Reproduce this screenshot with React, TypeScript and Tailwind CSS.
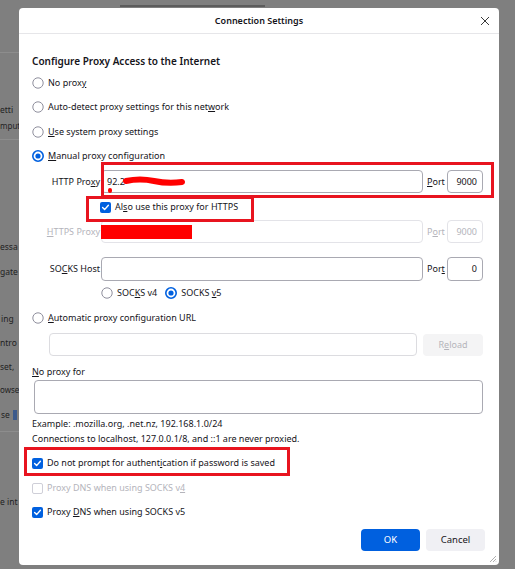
import React from 'react';

const font = { fontFamily: '"Noto Sans", "Liberation Sans", sans-serif' };

function Radio({ checked = false }: { checked?: boolean }) {
  return (
    <svg width="12" height="12" viewBox="0 0 12 12" className="shrink-0">
      {checked ? (
        <>
          <circle cx="6" cy="6" r="5.2" fill="white" stroke="#0060df" strokeWidth="1.6" />
          <circle cx="6" cy="6" r="2.6" fill="#0060df" />
        </>
      ) : (
        <circle cx="6" cy="6" r="5.2" fill="white" stroke="#8f8f9d" strokeWidth="1" />
      )}
    </svg>
  );
}

function Check({ checked = false, disabled = false }: { checked?: boolean; disabled?: boolean }) {
  if (!checked) {
    return (
      <span
        className={`w-[11px] h-[11px] shrink-0 rounded-[2px] border ${
          disabled ? 'border-[#cfcfd8]' : 'border-[#8f8f9d]'
        } bg-white`}
      />
    );
  }
  return (
    <span className="w-[11px] h-[11px] shrink-0 rounded-[2px] bg-[#0060df] flex items-center justify-center">
      <svg width="9" height="9" viewBox="0 0 9 9">
        <path d="M1.6 4.6 L3.6 6.6 L7.4 2.2" fill="none" stroke="white" strokeWidth="1.4" strokeLinecap="round" strokeLinejoin="round" />
      </svg>
    </span>
  );
}

function Field({ value = '', disabled = false, right = false, className = '' }: { value?: string; disabled?: boolean; right?: boolean; className?: string }) {
  return (
    <div
      className={`h-[23px] rounded-[4px] border bg-white flex items-center px-[5px] ${
        disabled ? 'border-[#e3e3e8] text-[#b4b4bb]' : 'border-[#a9a9b2] text-[#15141a]'
      } ${right ? 'justify-end' : ''} ${className}`}
    >
      {value}
    </div>
  );
}

export default function App() {
  return (
    <div className="w-[515px] h-[569px] bg-[#7f7f7f] flex overflow-hidden text-[9px] text-[#15141a] relative" style={font}>
      {/* dimmed prefs page peeking out on the left */}
      <div className="w-[19px] shrink-0 flex flex-col text-[#222] whitespace-nowrap overflow-hidden text-[8.5px]">
        <div className="h-[53px] border-b border-[#8d8d8d]" />
        <div className="mt-[49px] h-[16px] leading-[16px]">etti</div>
        <div className="h-[16px] leading-[16px] text-[8px]">mput</div>
        <div className="mt-[5px] border-b border-[#8d8d8d]" />
        <div className="mt-[99px] h-[16px] leading-[16px]">essa</div>
        <div className="mt-[9px] h-[16px] leading-[16px]">gate</div>
        <div className="mt-[31px] h-[16px] leading-[16px] ml-[1px]">ing</div>
        <div className="mt-[8px] h-[16px] leading-[16px]">ntro</div>
        <div className="mt-[8px] h-[16px] leading-[16px]">set,</div>
        <div className="mt-[7px] h-[16px] leading-[16px] text-[8px]">owse</div>
        <div className="mt-[9px] h-[16px] leading-[16px] ml-[1px] flex items-center gap-[3px]">
          se <span className="w-[4px] h-[10px] bg-[#3c5a8c]" />
        </div>
        <div className="mt-[8px] border-b border-[#8d8d8d]" />
        <div className="mt-[62px] h-[16px] leading-[16px]">e int</div>
      </div>

      <div className="w-[480px] shrink-0 flex flex-col">
        <div className="h-[8px]">
          <div className="ml-[101px] mt-[5px] w-[145px] h-[2px] bg-[#5c5c5c]" />
        </div>

        {/* dialog */}
        <div className="relative h-[557px] bg-white rounded-[4px] flex flex-col">
          <div className="h-[26px] border-b border-[#e6e6e9] flex items-center justify-center relative">
            <span className="font-semibold text-[9px]">Connection Settings</span>
            <svg className="absolute right-[9px] top-[8px]" width="10" height="10" viewBox="0 0 10 10">
              <path d="M1 1 L9 9 M9 1 L1 9" stroke="#3a3a3a" strokeWidth="1" />
            </svg>
          </div>

          <div className="flex flex-col pl-[13px] pr-[16px]">
            <div className="mt-[18px] h-[18px] flex items-center text-[10px] font-semibold">
              Configure Proxy Access to the Internet
            </div>

            <label className="mt-[4px] h-[18px] flex items-center gap-[4px]">
              <Radio /> <span>No prox<u>y</u></span>
            </label>
            <label className="mt-[6px] h-[18px] flex items-center gap-[4px]">
              <Radio /> <span>Auto-detect proxy settings for this net<u>w</u>ork</span>
            </label>
            <label className="mt-[7px] h-[18px] flex items-center gap-[4px]">
              <Radio /> <span><u>U</u>se system proxy settings</span>
            </label>
            <label className="mt-[6px] h-[18px] flex items-center gap-[4px]">
              <Radio checked /> <span><u>M</u>anual proxy configuration</span>
            </label>

            <div className="mt-[5px] flex items-center">
              <span className="w-[68px] text-right">HTTP Pro<u>x</u>y</span>
              <Field value="92.2" className="ml-[1px] flex-1" />
              <span className="w-[24px] pl-[4px]"><u>P</u>ort</span>
              <Field value="9000" right className="w-[36px]" />
            </div>

            <label className="mt-[5px] h-[18px] flex items-center gap-[4px] ml-[68px]">
              <Check checked /> <span>Al<u>s</u>o use this proxy for HTTPS</span>
            </label>

            <div className="mt-[4px] flex items-center text-[#b4b4bb]">
              <span className="w-[68px] text-right"><u>H</u>TTPS Proxy</span>
              <Field disabled className="ml-[1px] flex-1" />
              <span className="w-[24px] pl-[4px]">P<u>o</u>rt</span>
              <Field value="9000" disabled right className="w-[36px]" />
            </div>

            <div className="mt-[14px] flex items-center">
              <span className="w-[68px] text-right">SO<u>C</u>KS Host</span>
              <Field className="ml-[1px] flex-1 h-[24px]" />
              <span className="w-[24px] pl-[4px]">Por<u>t</u></span>
              <Field value="0" right className="w-[36px] h-[24px]" />
            </div>

            <div className="mt-[3px] h-[18px] flex items-center ml-[69px]">
              <label className="flex items-center gap-[4px]">
                <Radio /> <span>SOC<u>K</u>S v4</span>
              </label>
              <label className="flex items-center gap-[4px] ml-[8px]">
                <Radio checked /> <span>SOCKS <u>v</u>5</span>
              </label>
            </div>

            <label className="mt-[7px] h-[18px] flex items-center gap-[4px]">
              <Radio /> <span><u>A</u>utomatic proxy configuration URL</span>
            </label>

            <div className="mt-[6px] flex items-center ml-[17px] gap-[6px]">
              <Field className="flex-1 h-[22px] border-[#dcdce0]" />
              <button className="w-[60px] h-[22px] rounded-[4px] bg-[#f4f4f5] text-[#b4b4bb]">
                R<u>e</u>load
              </button>
            </div>

            <div className="mt-[8px] h-[16px] flex items-center">
              <span><u>N</u>o proxy for</span>
            </div>
            <div className="mt-[0px] ml-[2px] h-[34px] rounded-[4px] border border-[#a9a9b2]" />

            <div className="mt-[3px] h-[14px] flex items-center">
              Example: .mozilla.org, .net.nz, 192.168.1.0/24
            </div>
            <div className="mt-[1px] h-[14px] flex items-center">
              Connections to localhost, 127.0.0.1/8, and ::1 are never proxied.
            </div>

            <label className="mt-[8px] h-[18px] flex items-center gap-[4px]">
              <Check checked /> <span>Do not prompt for authent<u>i</u>cation if password is saved</span>
            </label>
            <label className="mt-[7px] h-[18px] flex items-center gap-[4px] text-[#b4b4bb]">
              <Check disabled /> <span>Proxy DNS when using SOCKS v<u>4</u></span>
            </label>
            <label className="mt-[6px] h-[18px] flex items-center gap-[4px]">
              <Check checked /> <span>Proxy <u>D</u>NS when using SOCKS v5</span>
            </label>

            <div className="mt-[8px] flex justify-end gap-[6px] -mr-[2px]">
              <button className="w-[59px] h-[22px] rounded-[4px] bg-[#0060df] text-white text-[9.5px]">OK</button>
              <button className="w-[59px] h-[22px] rounded-[4px] bg-[#f0f0f4] text-[#15141a] text-[9.5px]">Cancel</button>
            </div>
          </div>

          {/* resize grip */}
          <svg className="absolute right-[2px] bottom-[2px]" width="8" height="8" viewBox="0 0 8 8">
            <path d="M7 1 L1 7 M7 4 L4 7 M7 6.5 L6.5 7" stroke="#9a9a9a" strokeWidth="0.8" />
          </svg>
        </div>
      </div>

      {/* red markup layered on top */}
      <div className="absolute left-[101px] top-[162px] w-[393px] h-[36px] border-[3px] border-[#e8141f]" />
      <div className="absolute left-[86px] top-[196px] w-[168px] h-[26px] border-[3px] border-[#e8141f]" />
      <div className="absolute left-[24px] top-[447px] w-[266px] h-[29px] border-[3px] border-[#e8141f]" />
      <svg className="absolute left-[122px] top-[175px]" width="64" height="14" viewBox="0 0 64 14">
        <path d="M4 6 Q18 3 32 6 T60 7" stroke="#ff0000" strokeWidth="6" fill="none" strokeLinecap="round" />
      </svg>
      <div className="absolute left-[108px] top-[188px] w-[4px] h-[5px] rounded-full bg-[#ff0000]" />
      <div className="absolute left-[101px] top-[225px] w-[91px] h-[14px] bg-[#ff0000]" />
    </div>
  );
}
